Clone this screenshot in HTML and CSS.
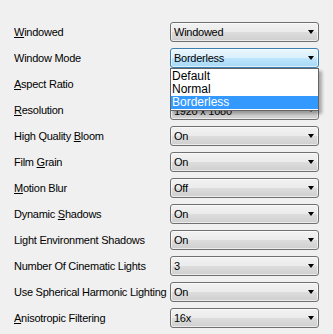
FILE: index.html
```html
<!DOCTYPE html>
<html lang="en">
  <head>
    <meta charset="UTF-8" />
    <title>Video Settings</title>
    <link rel="stylesheet" href="styles.css">
  </head>
  <body>
    <section class="settings">
      <div class="row">
        <label><u>W</u>indowed</label>
        <div class="combo"><span>Windowed</span><i class="arrow"></i></div>
      </div>
      <div class="row open">
        <label>Window Mode</label>
        <div class="combo focus"><span>Borderless</span><i class="arrow"></i></div>
        <ul class="dropdown">
          <li>Default</li>
          <li>Normal</li>
          <li class="sel">Borderless</li>
        </ul>
      </div>
      <div class="row">
        <label><u>A</u>spect Ratio</label>
        <div class="combo"><span></span><i class="arrow"></i></div>
      </div>
      <div class="row">
        <label><u>R</u>esolution</label>
        <div class="combo"><span class="peek"><span>1920 x 1080</span></span><i class="arrow"></i></div>
      </div>
      <div class="row">
        <label>High Quality <u>B</u>loom</label>
        <div class="combo"><span>On</span><i class="arrow"></i></div>
      </div>
      <div class="row">
        <label>Film <u>G</u>rain</label>
        <div class="combo"><span>On</span><i class="arrow"></i></div>
      </div>
      <div class="row">
        <label><u>M</u>otion Blur</label>
        <div class="combo"><span>Off</span><i class="arrow"></i></div>
      </div>
      <div class="row">
        <label>Dynamic <u>S</u>hadows</label>
        <div class="combo"><span>On</span><i class="arrow"></i></div>
      </div>
      <div class="row">
        <label>Light Environment Shadows</label>
        <div class="combo"><span>On</span><i class="arrow"></i></div>
      </div>
      <div class="row">
        <label>Number Of Cinematic Lights</label>
        <div class="combo"><span>3</span><i class="arrow"></i></div>
      </div>
      <div class="row">
        <label>Use Spherical Harmonic Lighting</label>
        <div class="combo"><span>On</span><i class="arrow"></i></div>
      </div>
      <div class="row">
        <label><u>A</u>nisotropic Filtering</label>
        <div class="combo"><span>16x</span><i class="arrow"></i></div>
      </div>
    </section>
  </body>
</html>
```

FILE: styles.css
```css
* {
  margin: 0;
  padding: 0;
  box-sizing: border-box;
}

body {
  background: #f0f0f0;
  font-family: "Liberation Sans", Arial, sans-serif;
  font-size: 11px;
  letter-spacing: -0.25px;
  color: #000;
}

.settings {
  display: flex;
  flex-direction: column;
  gap: 6px;
  padding: 22px 0 0 14px;
}

.row {
  position: relative;
  display: grid;
  grid-template-columns: 156px 149px;
  align-items: center;
  height: 20px;
}

.row label {
  white-space: nowrap;
  overflow: hidden;
}

.row label u {
  text-decoration-thickness: 1px;
  text-underline-offset: 1px;
}

.combo {
  display: flex;
  align-items: center;
  justify-content: space-between;
  height: 20px;
  padding: 0 4px 0 3px;
  border: 1px solid #707070;
  border-radius: 3px;
  background: linear-gradient(#f2f2f2 0%, #ebebeb 50%, #dddddd 50%, #cfcfcf 100%);
  box-shadow: inset 0 0 0 1px rgba(255, 255, 255, 0.6);
}

.combo.focus {
  border-color: #3c7fb1;
  background: linear-gradient(#eaf6fd 0%, #d9f0fc 50%, #bee6fd 50%, #a7d9f5 100%);
}

.arrow {
  width: 0;
  height: 0;
  border-left: 3.5px solid transparent;
  border-right: 3.5px solid transparent;
  border-top: 4px solid #000;
}

/* only the lower part of this value shows below the open list */
.peek {
  align-self: flex-end;
  display: flex;
  align-items: flex-end;
  height: 8px;
  margin-bottom: 1px;
  overflow: hidden;
  line-height: 13px;
}

.dropdown {
  position: absolute;
  top: 20px;
  left: 156px;
  width: 149px;
  list-style: none;
  background: #fff;
  border: 1px solid #646464;
  padding: 1px 0 1px;
  box-shadow: 3px 3px 3px rgba(0, 0, 0, 0.3);
  z-index: 2;
}

.dropdown li {
  height: 13px;
  line-height: 13px;
  padding-left: 1px;
  font-size: 12px;
  letter-spacing: 0;
}

.dropdown li.sel {
  background: #3399ff;
  color: #fff;
}
```
